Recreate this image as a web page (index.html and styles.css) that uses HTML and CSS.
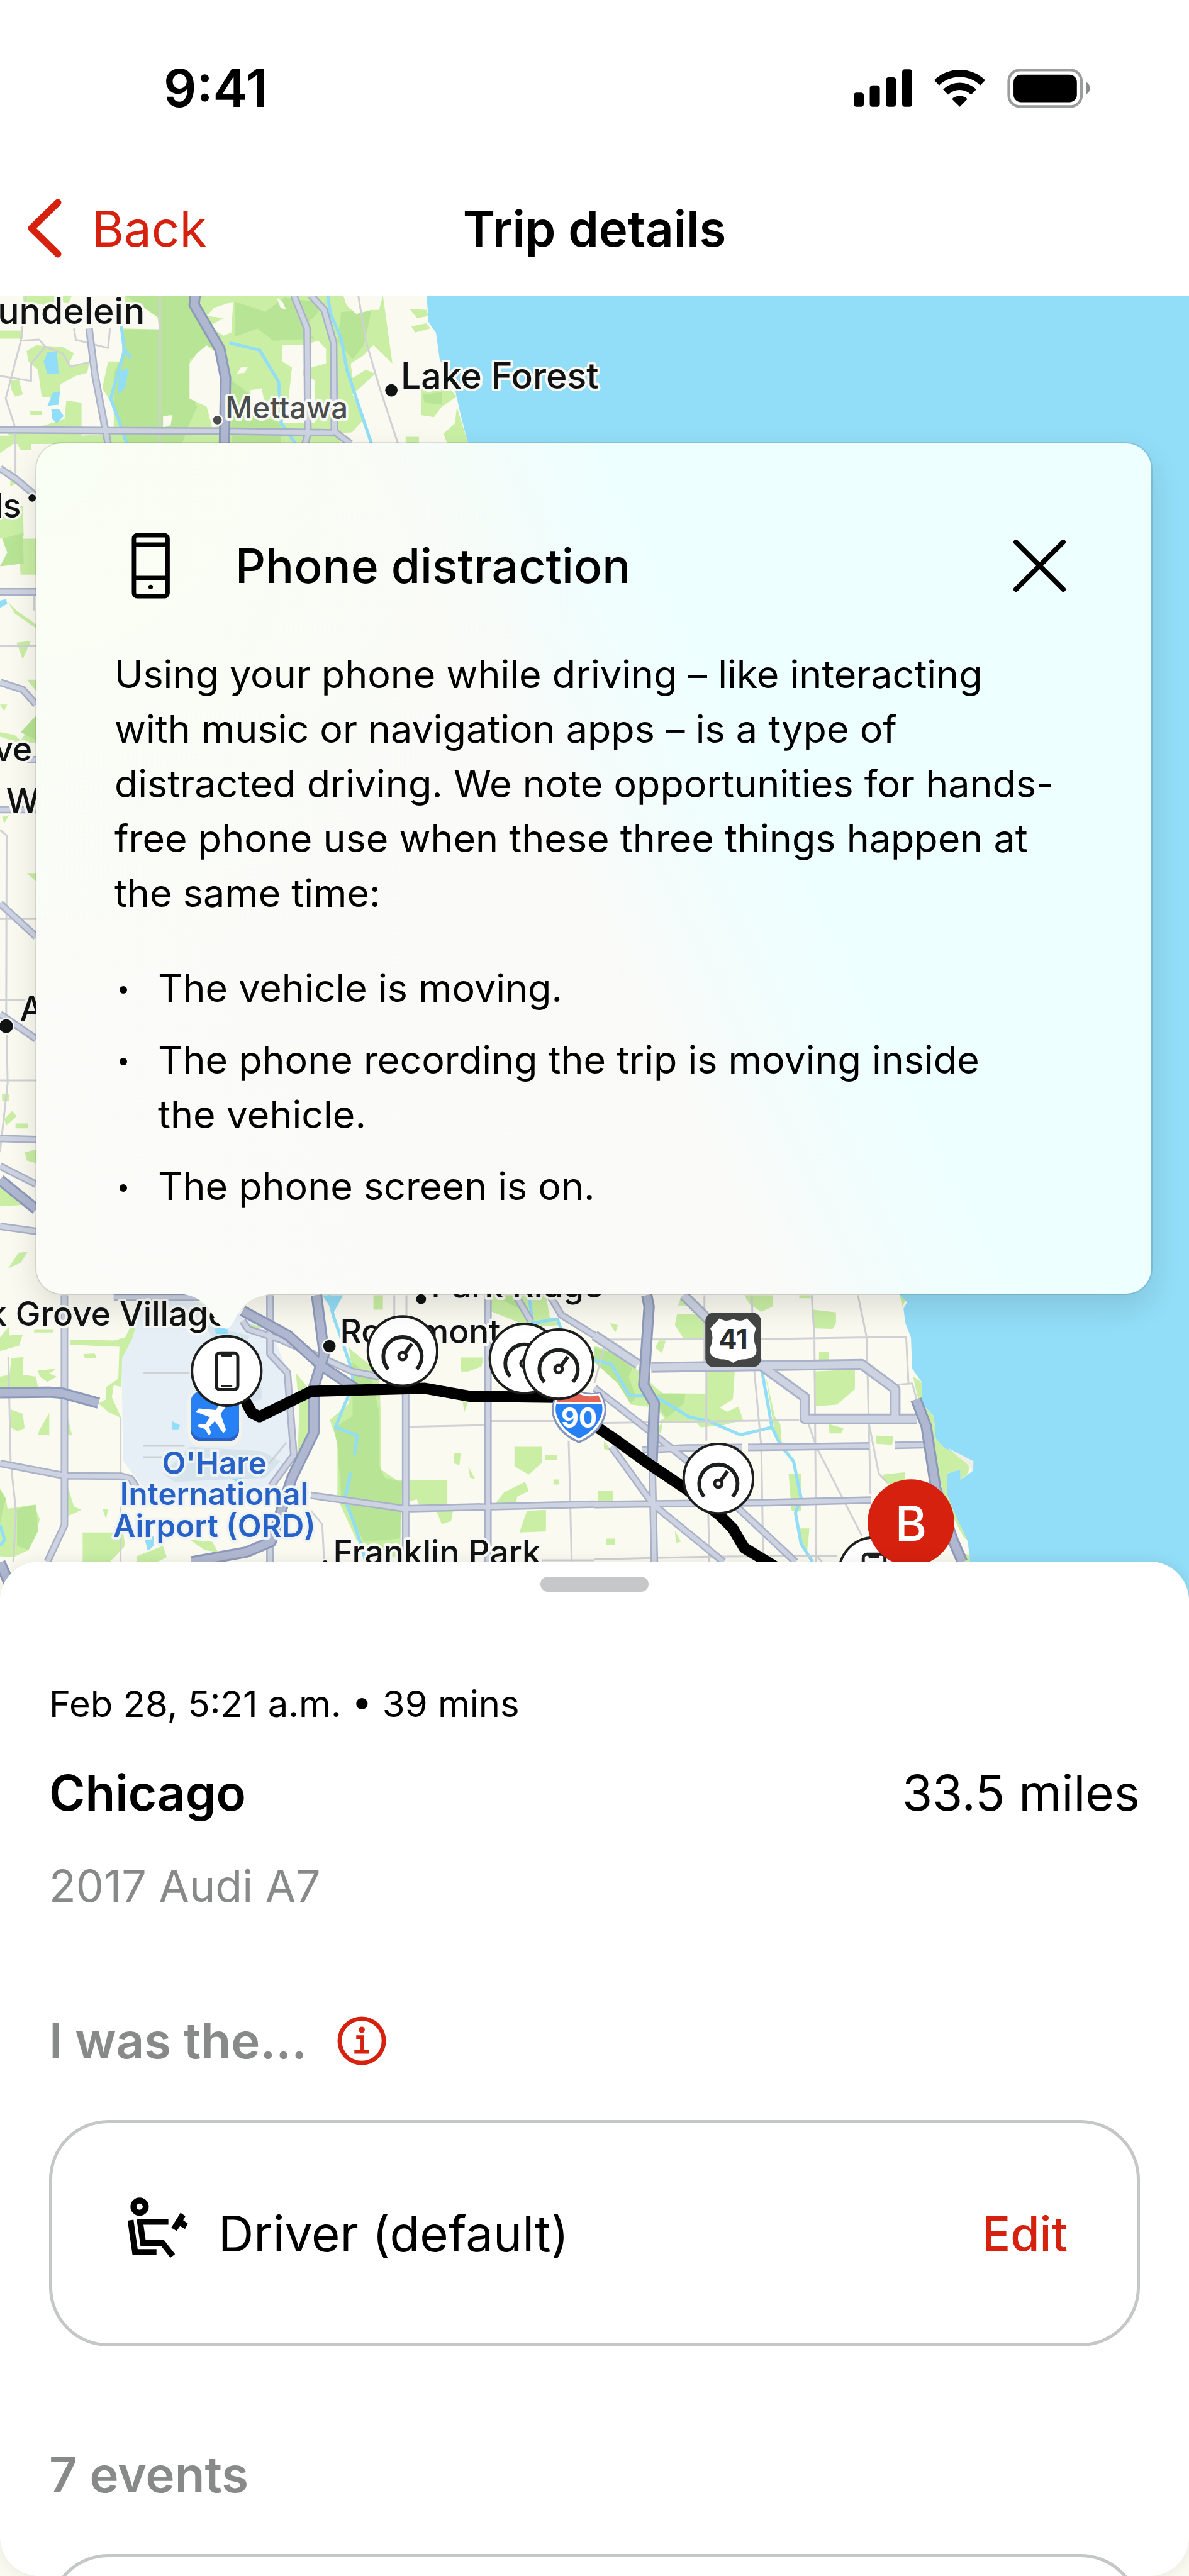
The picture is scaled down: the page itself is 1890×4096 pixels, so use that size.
FILE: index.html
```html
<!DOCTYPE html>
<html lang="en">
<head>
<meta charset="utf-8">
<meta name="viewport" content="width=device-width, initial-scale=1">
<title>Trip details</title>
<link rel="stylesheet" href="styles.css">
</head>
<body>
<div class="screen">
  <div class="status">
    <span class="clock">9:41</span>
    <span class="status-icons">
      <svg class="signal" viewBox="83 66 284 182" aria-hidden="true"><rect x="83" y="179" width="49" height="69" rx="13"/><rect x="161" y="144" width="49" height="104" rx="13"/><rect x="239" y="105" width="49" height="143" rx="13"/><rect x="318" y="66" width="49" height="182" rx="13"/></svg>
      <svg class="wifi" viewBox="475 66 247 182" aria-hidden="true"><path d="M475 119 A176 176 0 0 1 722 119 L698 144 A142 142 0 0 0 499 144Z"/><path d="M518 164 A114 114 0 0 1 679 164 L654 189 A80 80 0 0 0 542 189Z"/><path d="M561 210 A54 54 0 0 1 636 210 L599 248Z"/></svg>
      <svg class="battery" viewBox="831 61 401 192" aria-hidden="true"><rect x="838" y="68" width="352" height="177" rx="54" fill="none" stroke="#9b9d9c" stroke-width="13"/><rect x="861" y="91" width="307" height="133" rx="36"/><path d="M1212 126 Q1231 136 1232 156 Q1231 176 1212 186Z" fill="#8a8c8b"/></svg>
    </span>
  </div>

  <header class="nav">
    <a class="back" href="#trips">
      <svg class="chevron" viewBox="0 0 56 94" aria-hidden="true"><path d="M50 6 L8 47 L50 88"/></svg>
      <span>Back</span>
    </a>
    <h1 class="nav-title">Trip details</h1>
  </header>

  <main class="stage">
    <svg class="map" viewBox="0 477 1920 3685" preserveAspectRatio="xMidYMin slice" role="img" aria-label="Trip map">
      <defs>
        <g id="speed">
          <circle r="56" fill="#fff" stroke="#1d1e1e" stroke-width="4"/>
          <path d="M-23 29 A31 31 0 1 1 23 29" fill="none" stroke="#1d1e1e" stroke-width="6"/>
          <circle cy="8" r="6" fill="none" stroke="#1d1e1e" stroke-width="5"/>
          <path d="M4 3 L15 -12" stroke="#1d1e1e" stroke-width="6"/>
        </g>
        <g id="phone">
          <circle r="56" fill="#fff" stroke="#1d1e1e" stroke-width="4"/>
          <rect x="-17" y="-29" width="35" height="59" rx="6" fill="none" stroke="#1d1e1e" stroke-width="5"/>
          <path d="M-10 -30 H10 L8 -23 H-8Z" fill="#1d1e1e"/>
          <path d="M-9 24 H9" stroke="#1d1e1e" stroke-width="3"/>
        </g>
      </defs>
      <rect y="477" width="1920" height="3685" fill="#fbfaf1"/>

      <!-- north suburbs -->
      <g transform="translate(0 470) scale(.6122 .3333)">
        <g fill="#c9eea4">
          <path d="M328 20 H1010 L1035 350 985 260 960 310 925 350 930 420 965 380 990 400 930 500 960 620 900 740 H50 L20 690 80 670 170 620 175 530 215 540 215 700 300 690 300 560 270 470 285 340 320 340 325 180 420 185 415 125 385 80 330 65Z"/>
          <path d="M60 20 H190 L180 60 150 40 130 70 60 50Z M0 190 H60 V230 H0Z M95 20 H120 V50 H95Z"/>
          <path d="M70 290 L95 262 165 270 195 300 180 360 235 350 230 395 200 410 160 450 155 520 110 510 100 380 75 340Z"/>
          <path d="M30 430 L50 430 60 500 40 510 28 470Z M80 580 H110 V600 H80Z M0 700 H80 L95 740 H0Z"/>
          <path d="M1080 85 L1125 90 1130 120 1100 130Z M1085 170 L1125 155 1135 180 1095 200Z M1110 470 L1190 480 1205 510 1165 560 1145 610 1110 600Z M1205 560 L1235 740 H1180 L1170 690 1200 640Z M1070 705 H1105 V740 H1070Z"/>
          <path d="M440 520 L600 470 600 640 520 640Z"/>
        </g>
        <g fill="#b8e495">
          <path d="M330 20 H540 L500 70 540 150 560 260 500 330 500 480 520 560 500 640 480 740 H330 L300 560 300 400 325 300 325 185 420 185 420 130Z"/>
          <path d="M620 50 L700 100 750 30 860 60 800 180 830 230 720 240 680 180 620 220Z"/>
          <path d="M900 100 L980 90 960 260 930 330 890 240Z M610 430 L660 500 680 600 740 640 740 740 610 740Z M1115 500 L1165 490 1165 550 1120 540Z"/>
        </g>
        <g fill="#fbfaf1">
          <path d="M565 80 L615 50 610 200 590 215 550 170 590 130 545 120Z"/>
          <path d="M545 262 L565 290 590 400 590 650 560 660 545 560 500 520 500 350 520 300Z"/>
          <path d="M745 262 H800 L840 240 860 280 860 350 800 380 800 410 830 430 830 640 745 640 760 540 770 370 745 340Z"/>
          <path d="M625 400 L635 370 655 365 645 395Z M730 30 L745 50 755 90 740 80Z M905 20 H1010 L1000 90 980 90 940 110 915 70Z"/>
          <path d="M660 480 L690 470 700 560 670 600Z M900 690 L940 680 950 740 900 740Z M430 605 L455 600 450 650 430 660Z"/>
        </g>
        <g fill="#92ddf7"><path d="M125 295 L150 295 155 400 125 400 115 340Z M140 490 L158 485 155 550 125 555Z M135 570 L155 570 168 605 150 640 138 620Z M315 390 L340 370 330 470 310 500Z"/></g>
        <g class="stream"><path d="M320 170 L328 290 292 520 318 650 335 740 M328 280 L345 325 M605 250 L685 285 735 440 742 640 780 740 M864 20 L872 110 900 230 915 380 940 520 980 740"/></g>
        <g class="lane"><path d="M422 20 V740 M945 20 L965 240 1000 460 1050 740 M68 20 L55 240 15 520 40 660 V740 M55 240 L103 234 120 270 165 300 185 365 245 340 M120 270 L82 350 82 435 0 410 M195 180 L200 235 285 275 290 180"/></g>
        <g class="road-edge"><path d="M235 180 L250 400 285 740 M775 20 L810 180 812 690 805 740 M820 20 L855 90 880 250 882 680 925 740 M0 672 L590 678 880 686"/></g>
        <g class="road"><path d="M235 180 L250 400 285 740 M775 20 L810 180 812 690 805 740 M820 20 L855 90 880 250 882 680 925 740 M0 672 L590 678 880 686"/></g>
        <g class="highway-edge"><path d="M515 20 L512 65 580 280 595 420 592 740"/></g>
        <g class="highway"><path d="M515 20 L512 65 580 280 595 420 592 740"/></g>
      </g>

      <!-- western edge -->
      <g transform="translate(0 700) scale(.3333 .8929)">
        <g fill="#c9eea4">
          <path d="M0 5 H150 V30 H100 L80 15 0 35Z M50 60 L80 90 50 95Z M0 150 L110 130 115 185 0 190Z M85 190 H175 V255 H100Z M0 540 L70 545 100 555 175 515 V560 L90 560 0 548Z M80 378 L150 375 110 408Z M130 445 H175 V465Z M0 490 L35 490 20 502Z M40 305 L80 320 175 345 V352 L70 325Z M10 693 L45 690 20 705Z M130 795 H175 V810Z"/>
          <path d="M10 1195 H45 V1207 H10Z M20 1240 L60 1225 80 1235 30 1252Z M75 1248 H135 V1257 H75Z M120 1300 L175 1295 V1320 L130 1315Z M0 1360 L90 1375 120 1395 0 1398Z M40 1510 L90 1482 135 1480 100 1500Z"/>
        </g>
        <path d="M10 190 L110 180 115 235 0 240 35 215Z M100 540 L175 510 V555Z" fill="#b8e495"/>
        <path d="M0 302 L30 299 35 308 0 315Z" fill="#92ddf7"/>
        <g class="lane"><path d="M75 0 V75 M0 384 H175 M0 717 L32 727 30 1050 37 1175 0 1300 M0 878 H175 M0 1025 H140 M0 1170 H175 M165 285 V320"/></g>
        <g class="road-edge"><path d="M0 63 L80 83 175 113 M0 286 H175 M0 450 L110 463 175 490 M100 590 H175 M0 680 H175 M0 850 L175 910 M0 1050 L175 1095 M0 1275 L175 1277 M0 1325 L175 1358 M0 1434 L175 1443"/></g>
        <g class="road"><path d="M0 63 L80 83 175 113 M0 286 H175 M0 450 L110 463 175 490 M100 590 H175 M0 680 H175 M0 850 L175 910 M0 1050 L175 1095 M0 1275 L175 1277 M0 1325 L175 1358 M0 1434 L175 1443"/></g>
        <g class="highway-edge"><path d="M0 1350 L175 1403"/></g>
        <g class="highway"><path d="M0 1350 L175 1403"/></g>
      </g>

      <!-- airport and inner suburbs -->
      <g transform="translate(0 2060) scale(.6122 .3333)">
        <path d="M360 200 L400 95 500 120 640 190 720 290 760 470 775 840 710 1020 500 1060 380 1030 325 900 320 400Z" fill="#e6eef6"/>
        <path d="M540 240 L660 290 650 320 560 300Z M620 540 L690 540 690 600 640 620Z M500 830 L690 850 740 900 700 980 460 1000 430 960Z" fill="#d6e5ec"/>
        <g fill="#c9eea4">
          <path d="M25 150 V290 L60 285 50 340 0 366 V300 L22 250Z M90 260 H140 V276 H90Z M30 400 L62 395 60 480 95 490 100 540 0 540 V490 L25 480Z M100 460 L150 450 130 475 150 490 125 515 105 490Z M220 380 L250 378 255 400 225 402Z"/>
          <path d="M185 310 L300 315 330 300 370 150 350 300 322 400 320 540 300 530 295 590 320 690 285 660 260 620 280 600 280 540 312 500 315 345 185 335Z"/>
          <path d="M30 650 L60 670 65 740 45 755 25 730Z M130 665 V775 L100 770 105 745Z M175 660 L190 775 170 770Z M0 1030 L15 1080 20 1130 90 1110 105 1180 95 1250 75 1330 35 1365 0 1360Z"/>
          <path d="M175 1000 L195 1120 215 1135 180 1165Z M218 1245 H325 L330 1310 290 1387 H218Z M360 1360 L430 1310 440 1365 415 1387 H360Z M500 1280 L560 1290 575 1340 540 1330Z M270 1130 L285 1130 280 1180Z"/>
          <path d="M780 470 L815 550 815 760 785 860 790 640Z M650 230 L690 250 670 265Z M985 95 H1010 V165 H985Z M1215 397 H1275 L1270 440 1235 465 1215 465Z M1198 860 L1215 862 1212 920 1198 910Z M1235 925 L1253 985 1240 980Z M1357 830 H1430 L1430 905 1395 965 1357 925Z M1437 870 H1470 V893 H1437Z M1460 988 H1475 V1013 H1460Z M1308 1100 L1330 1050 1385 1000 1395 1045 1365 1070 1360 1100 1310 1120Z M1390 1140 L1440 1135 1440 1240 1370 1245Z M1220 610 L1235 610 1225 660Z"/>
          <path d="M920 350 L1000 470 1005 700 1005 940 1045 990 1180 990 1180 1110 1105 1110 1100 1085 1060 1100 1055 1360 980 1370 940 1280 890 1080 890 800 870 700 920 620 930 480Z"/>
          <path d="M1150 1135 L1195 1140 1190 1190 1165 1205Z M1295 95 H1440 L1450 200 1480 240 1400 250 1290 170Z"/>
        </g>
        <path d="M930 420 L980 500 1000 660 1000 920 1015 980 1060 1000 1055 1275 960 1290 900 1080 890 820 880 740 930 680Z M45 1130 L95 1110 100 1240 75 1330 45 1310Z M0 1040 L15 1080 0 1200Z M1300 95 H1350 L1390 180Z" fill="#b8e495"/>
        <g fill="#92ddf7"><path d="M565 255 H600 V283 H570Z M453 705 L475 725 470 745 453 745Z M380 1265 H405 V1310 L390 1335Z M610 985 L640 980 625 1000Z M850 95 L905 95 880 180 870 150Z"/></g>
        <g class="stream"><path d="M865 95 L880 200 905 330 930 470 930 540 910 620 885 735 942 775 935 870 M925 955 L910 1080 945 1260 965 1387 M0 1210 L12 1280 0 1310 M1395 95 L1405 230 1470 210 1480 260"/></g>
        <g class="lane"><path d="M22 395 L28 900 42 1140 35 1387 M318 690 V1387 M378 473 H500 M378 825 H487 M378 880 H430 M1075 733 L1280 725 1295 705 H1568 M1040 95 V250 M1500 800 L1508 1387 M710 910 L755 810 M820 1140 L850 1205 855 1387 M1430 1380 H1568 M1072 95 V200"/></g>
        <g class="road-edge"><path d="M170 95 V1210 L125 1387 M0 910 L170 970 320 972 345 985 365 1040 M300 105 H560 M712 95 V380 L758 470 775 870 715 1020 M640 220 L655 260 740 310 930 465 1000 490 M820 1065 L1068 1130 1568 1108 M1070 570 V1387 M1287 95 V1387 M1360 95 L1400 220 M1450 95 L1480 190 1568 290 M712 1280 V1387"/></g>
        <g class="road"><path d="M170 95 V1210 L125 1387 M0 910 L170 970 320 972 345 985 365 1040 M300 105 H560 M712 95 V380 L758 470 775 870 715 1020 M640 220 L655 260 740 310 930 465 1000 490 M820 1065 L1068 1130 1568 1108 M1070 570 V1387 M1287 95 V1387 M1360 95 L1400 220 M1450 95 L1480 190 1568 290 M712 1280 V1387"/></g>
        <g class="highway-edge"><path d="M0 568 L130 565 165 570 260 618 M0 1390 L40 1560 M640 170 L760 290 850 440 940 550 M835 95 L855 380 828 540 828 760 770 980 715 1290 650 1340 505 1387"/></g>
        <g class="highway"><path d="M0 568 L130 565 165 570 260 618 M0 1390 L40 1560 M640 170 L760 290 850 440 940 550 M835 95 L855 380 828 540 828 760 770 980 715 1290 650 1340 505 1387"/></g>
      </g>

      <!-- city and lake front -->
      <g transform="translate(960 2060) scale(.6122 .3333)">
        <g fill="#c9eea4">
          <path d="M0 340 L60 380 110 450 160 540 180 570 295 572 298 460 370 465 365 600 330 640 350 660 380 635 392 700 340 725 280 735 265 705 170 705 185 690 160 640 95 625 60 500 0 410Z"/>
          <path d="M218 185 H290 L292 300 235 305 212 240Z M230 95 L245 145 220 145Z M395 95 H470 V150 L440 175 410 140Z M577 165 L637 178 637 230 628 258 578 255Z M592 368 H618 V415 H592Z M578 465 L687 455 687 550 640 625 582 635Z M540 95 H570 V110 H540Z M40 230 L62 240 55 275Z M170 315 L188 315 178 375 160 350Z"/>
          <path d="M450 470 L475 680 490 720 495 825 478 790 465 640Z M618 720 L657 740 650 765 620 765Z M742 775 L788 780 785 820 742 815Z M760 965 L818 953 818 1010 770 1010Z M512 960 H545 V1140 H520Z M540 1225 H567 L560 1350 540 1290Z M10 1045 H48 V1095 H10Z M30 1275 H54 V1305 H30Z M212 1235 L228 1290 215 1295Z M805 95 L820 120 812 150Z M25 800 L45 850 25 840Z M180 710 L175 770 165 740Z"/>
        </g>
        <path d="M0 350 L50 375 100 450 90 490 110 590 95 620 60 520 0 420Z M165 572 H240 L235 620 190 690 170 640Z" fill="#b8e495"/>
        <g class="stream"><path d="M0 410 L45 430 92 582 160 585 250 685 300 705 385 772 468 735 442 465 M468 735 L490 820 525 900 545 1080 530 1150 545 1300 575 1387"/></g>
        <g class="lane"><path d="M290 95 V420 M415 95 L420 430 440 830 445 1387 M573 95 L580 300 585 1387 M695 95 L718 300 728 1060 M822 295 L828 520 M0 310 L440 308 822 296 M0 715 L540 700 M295 460 V800 M565 720 L585 830 705 1260 M722 700 L750 960 770 1000 M25 350 L0 520 M0 1375 L300 1362 640 1357 M790 530 L838 523 850 600 M300 1150 L303 1387 M585 1357 L600 1387"/></g>
        <g class="road-edge"><path d="M0 545 L150 760 250 905 530 1387 M125 845 L240 835 390 833 M405 833 L725 825 M792 823 L870 820 M45 830 L155 1110 340 1387 M0 1110 L460 1100 730 1088 M152 900 L158 1387"/></g>
        <g class="road"><path d="M0 545 L150 760 250 905 530 1387 M125 845 L240 835 390 833 M405 833 L725 825 M792 823 L870 820 M45 830 L155 1110 340 1387 M0 1110 L460 1100 730 1088 M152 900 L158 1387"/></g>
        <g class="avenue-edge"><path d="M0 290 L115 430 M235 95 L370 340 450 450 555 590 V695 H850 M150 445 L705 430 793 550 V690"/></g>
        <g class="avenue"><path d="M0 290 L115 430 M235 95 L370 340 450 450 555 590 V695 H850 M150 445 L705 430 793 550 V690"/></g>
      </g>

      <path d="M689 477 L692 520 704 537 710 580 735 630 744 670 756 717 900 1100 1300 1800 1453 2092 1465 2103 1459 2113 1462 2137 1471 2160 1473 2210 1489 2233 1488 2267 1508 2287 1511 2323 1523 2337 1541 2347 1572 2360 1569 2377 1551 2390 1551 2373 1529 2380 1529 2413 1541 2443 1563 2490 1566 2522 1600 2700 1920 3900 V477Z" fill="#92ddf7"/>
      <path d="M1474 2222 L1489 2233 1488 2267 1508 2287 1511 2323 1523 2337 1541 2347 1566 2366 1563 2380 1551 2390 1551 2373 1529 2380 1529 2413 1541 2443 1563 2490 1556 2482 1528 2430 1510 2360 1490 2290Z M1548 2505 L1566 2512 V2524 H1552Z" fill="#c9eea4"/>
      <path d="M1530 2338 L1572 2360 1571 2378 1562 2365Z" fill="#efefe4"/>

      <g transform="translate(960 2060) scale(.6122 .3333)">
        <g class="highway-edge"><path d="M138 95 L144 150 130 530 158 620 152 900 M848 600 L875 730 900 1030 945 1280 970 1387"/></g>
        <g class="highway"><path d="M138 95 L144 150 130 530 158 620 152 900 M848 600 L875 730 900 1030 945 1280 970 1387"/></g>
      </g>

      <g class="place">
        <text x="234" y="523" text-anchor="end" class="wide">undelein</text>
        <text x="34" y="836" text-anchor="end">ls</text><circle cx="52" cy="804" r="6"/>
        <text x="52" y="1229" text-anchor="end">ve</text>
        <text x="10" y="1312">W</text>
        <circle cx="10" cy="1657" r="11"/><text x="32" y="1648">A</text>
        <text x="368" y="2141" text-anchor="end">k Grove Village</text>
        <circle cx="680" cy="2098" r="8"/><text x="696" y="2095">Park Ridge</text>
        <circle cx="532" cy="2174" r="10"/><text x="549" y="2169">Rosemont</text>
        <circle cx="525" cy="2524" r="4"/><text x="538" y="2526">Franklin Park</text>
      </g>
      <g class="place"><circle cx="632" cy="630" r="10"/><text x="647" y="627" class="wide">Lake Forest</text></g>
      <g class="place minor"><circle cx="351" cy="678" r="7"/><text x="364" y="675">Mettawa</text></g>

      <path d="M389 2250 L407 2282 419 2288 502 2247 686 2242 759 2255 918 2257 960 2302 994 2325 1046 2363 1107 2404 1162 2447 1183 2468 1202 2500 1242 2524 1300 2560" fill="none" stroke="#000" stroke-width="18" stroke-linejoin="round"/>

      <!-- airport badge -->
      <rect x="303" y="2244" width="88" height="92" rx="22" fill="#f3f3ec"/>
      <rect x="308" y="2248" width="78" height="80" rx="18" fill="#2b60c4"/>
      <rect x="308" y="2246" width="78" height="76" rx="18" fill="#2880f5"/>
      <g transform="translate(346 2288) rotate(38)"><path fill="#fff" d="M0 -34 C4 -34 5 -28 5 -22 V-10 L28 5 V12 L5 5 L4 18 L12 24 V29 L0 25 L-12 29 V24 L-4 18 L-5 5 L-28 12 V5 L-5 -10 V-22 C-5 -28 -4 -34 0 -34Z"/></g>
      <g class="airport"><text x="346" y="2381">O'Hare</text><text x="346" y="2431">International</text><text x="346" y="2482">Airport (ORD)</text></g>

      <!-- route shields -->
      <rect x="1139" y="2120" width="90" height="88" rx="14" fill="#444645"/>
      <path d="M1162 2129 Q1172 2136 1184 2130 Q1196 2136 1206 2129 L1221 2145 Q1214 2160 1221 2176 Q1225 2192 1204 2195 Q1191 2195 1184 2201 Q1177 2195 1164 2195 Q1143 2192 1147 2176 Q1154 2160 1147 2145Z" fill="#fff"/>
      <text class="shield" x="1184" y="2179" fill="#2b2c2c">41</text>
      <path d="M900 2248 Q918 2252 935 2246 Q952 2252 970 2248 Q982 2268 978 2286 Q970 2316 935 2331 Q900 2316 892 2286 Q888 2268 900 2248Z" fill="#8694b8"/>
      <path d="M902 2250 Q918 2255 935 2248 Q952 2255 968 2250 Q979 2268 975 2285 Q967 2313 935 2327 Q903 2313 895 2285 Q891 2268 902 2250Z" fill="#fff"/>
      <path d="M898 2268 H972 Q974 2278 971 2286 Q963 2310 935 2323 Q907 2310 899 2286 Q896 2278 898 2268Z" fill="#2880f5"/>
      <path d="M904 2253 Q920 2258 935 2251 Q950 2258 966 2253 L971 2264 H899Z" fill="#e66457"/>
      <text class="shield" x="935" y="2306" fill="#fff">90</text>

      <use href="#speed" x="650" y="2182"/>
      <use href="#speed" x="847" y="2194"/>
      <use href="#speed" x="902" y="2203"/>
      <use href="#speed" x="1160" y="2388"/>
      <use href="#phone" x="366" y="2214"/>
      <use href="#phone" x="1411" y="2539"/>
      <circle cx="1471" cy="2459" r="70" fill="#d6210f"/>
      <text class="stop" x="1471" y="2488">B</text>
    </svg>

    <section class="popover" aria-labelledby="popover-title">
      <div class="popover-head">
        <svg class="device" viewBox="66 62 184 320" aria-hidden="true"><rect x="77" y="74" width="163" height="296" rx="16"/><path d="M77 120 H240 M77 281 H240"/><circle cx="158" cy="325" r="11"/></svg>
        <h2 id="popover-title">Phone distraction</h2>
        <button class="close" type="button" aria-label="Close"><svg viewBox="0 0 84 84" aria-hidden="true"><path d="M4 4 L80 80 M80 4 L4 80"/></svg></button>
      </div>
      <p>Using your phone while driving – like interacting with music or navigation apps – is a type of distracted driving. We note opportunities for hands-free phone use when these three things happen at the same time:</p>
      <ul>
        <li>The vehicle is moving.</li>
        <li>The phone recording the trip is moving inside the vehicle.</li>
        <li>The phone screen is on.</li>
      </ul>
      <svg class="tail" viewBox="0 0 172 58" aria-hidden="true"><path d="M0 0 C40 0 52 18 66 40 C74 53 80 56 84 57 C90 56 94 50 100 38 C112 16 128 0 172 0Z"/></svg>
    </section>

    <section class="sheet">
      <span class="handle"></span>
      <p class="when">Feb 28, 5:21 a.m. • 39 mins</p>
      <div class="trip"><h2>Chicago</h2><span class="distance">33.5 miles</span></div>
      <p class="vehicle">2017 Audi A7</p>
      <div class="role">
        <h3>I was the...</h3>
        <button class="info" type="button" aria-label="About roles"><svg viewBox="-40 -40 80 80" aria-hidden="true"><circle r="36" fill="none" stroke="currentColor" stroke-width="7"/><circle cy="-18" r="5" fill="currentColor"/><path d="M-9 -6 H1 V18 M-12 18 H12" fill="none" stroke="currentColor" stroke-width="6"/></svg></button>
      </div>
      <div class="card">
        <svg class="driver" viewBox="40 65 300 356" aria-hidden="true"><circle cx="104" cy="112" r="30" fill="none" stroke="#000" stroke-width="29"/><path d="M60 178 L82 333 H186 M244 186 H106 L121 288 H215 L265 352" fill="none" stroke="#000" stroke-width="29"/><path d="M303 142 L327 158 316 178 339 195 325 221 301 207 284 230 258 215Z"/></svg>
        <span class="card-text">Driver (default)</span>
        <button class="edit" type="button">Edit</button>
      </div>
      <h3 class="events">7 events</h3>
      <div class="card"></div>
    </section>
  </main>
</div>
</body>
</html>
```
FILE: styles.css
```css
* { box-sizing: border-box; }

body {
  margin: 0;
  background: #fff;
  color: #000;
  font-family: Inter, "Liberation Sans", sans-serif;
}

h1, h2, h3, p, ul { margin: 0; padding: 0; }

button {
  margin: 0;
  padding: 0;
  border: 0;
  background: none;
  font: inherit;
}

svg { display: block; }

.screen {
  display: flex;
  flex-direction: column;
  height: 100vh;
  overflow: hidden;
}

/* Status bar */
.status {
  display: flex;
  flex: none;
  align-items: center;
  justify-content: space-between;
  height: 256px;
  padding: 24px 157px 0 260px;
}
.clock { font-size: 82px; font-weight: 600; }
.status-icons { display: flex; align-items: center; gap: 35px; }
.signal { width: 93px; height: 60px; }
.wifi { width: 81px; height: 60px; }
.battery { width: 132px; height: 63px; }

/* Navigation bar */
.nav {
  display: grid;
  flex: none;
  grid-template-columns: 1fr auto 1fr;
  align-items: center;
  height: 214px;
  padding: 0 42px;
}
.back {
  display: flex;
  align-items: center;
  gap: 48px;
  color: #d6210f;
  font-size: 78px;
  text-decoration: none;
}
.chevron {
  width: 56px;
  height: 94px;
  fill: none;
  stroke: currentColor;
  stroke-width: 11;
  stroke-linecap: round;
  stroke-linejoin: round;
}
.nav-title { font-size: 78px; font-weight: 600; }

/* Map */
.stage {
  position: relative;
  display: flex;
  flex: 1;
  flex-direction: column;
  min-height: 0;
}
.map {
  position: absolute;
  inset: 0;
  width: 100%;
  height: 100%;
}
.map g[class] path { fill: none; vector-effect: non-scaling-stroke; stroke-linejoin: round; }
.stream path { stroke: #92ddf7; stroke-width: 5; }
.lane path { stroke: #d0d1d5; stroke-width: 3; }
.road-edge path { stroke: #a9b2c9; stroke-width: 12; }
.road path { stroke: #cdd3e1; stroke-width: 7; }
.avenue-edge path { stroke: #a9b2c9; stroke-width: 17; }
.avenue path { stroke: #cdd3e1; stroke-width: 11; }
.highway-edge path { stroke: #8d99b8; stroke-width: 18; }
.highway path { stroke: #afb8d0; stroke-width: 12; }

.map text { font-weight: 500; }
.place {
  fill: #111212;
  font-size: 54px;
  stroke: #f8f8f4;
  stroke-width: 8;
  stroke-linejoin: round;
  paint-order: stroke;
}
.place circle { stroke-width: 5; }
.wide { font-size: 58px; }
.minor { fill: #4c4e4e; font-size: 48px; }
.airport {
  fill: #2763c6;
  font-size: 50px;
  text-anchor: middle;
  stroke: #f0f3f5;
  stroke-width: 8;
  stroke-linejoin: round;
  paint-order: stroke;
}
.map .airport text { font-weight: 600; }
.map .shield { font-size: 44px; font-weight: 700; text-anchor: middle; }
.stop { fill: #fff; font-size: 78px; text-anchor: middle; }

/* Explanation popover */
.popover {
  position: relative;
  flex: none;
  margin: 235px 60px 0 58px;
  padding: 134px 132px 127px 124px;
  border-radius: 40px;
  background:
    radial-gradient(circle at 0 0, #f9fff3 0, rgba(249, 255, 243, 0) 900px),
    linear-gradient(64deg, #fbfcf8 0, #fafaf8 48%, #f0fdfc 58%, #eeffff 64%);
  box-shadow: 0 0 0 2px rgba(0, 0, 0, .1), 0 20px 50px rgba(0, 0, 0, .12);
  font-size: 61px;
  line-height: 87px;
}
.popover-head {
  display: flex;
  align-items: center;
  height: 120px;
  margin-bottom: 70px;
}
.popover-head h2 { flex: 1; font-size: 75px; font-weight: 500; }
.device {
  width: 61px;
  height: 105px;
  margin: 0 104px 0 27px;
  fill: none;
  stroke: #000;
  stroke-width: 21;
}
.device circle { fill: #000; stroke: none; }
.close { margin-right: 4px; }
.close svg {
  width: 83px;
  height: 83px;
  stroke: #000;
  stroke-width: 8;
  stroke-linecap: round;
}
.popover ul {
  display: grid;
  gap: 27px;
  margin-top: 64px;
  padding-right: 60px;
  list-style: none;
}
.popover li { display: flex; }
.popover li::before {
  flex: none;
  width: 12px;
  height: 12px;
  margin: 40px 49px 0 8px;
  border-radius: 50%;
  background: #000;
  content: "";
}
.tail {
  position: absolute;
  top: 100%;
  left: 219px;
  width: 169px;
  height: 57px;
  fill: #fafcf7;
}

/* Trip sheet */
.sheet {
  position: relative;
  display: flex;
  flex: 1;
  flex-direction: column;
  min-height: 0;
  margin-top: 426px;
  padding: 24px 78px 0;
  overflow: hidden;
  border-radius: 62px;
  background: #fff;
  box-shadow: 0 0 24px rgba(0, 0, 0, .08);
}
.sheet > * { flex: none; }
.handle {
  align-self: center;
  width: 172px;
  height: 24px;
  margin-bottom: 142px;
  border-radius: 12px;
  background: #c5c7c9;
}
.when { font-size: 58px; line-height: 72px; }
.trip {
  display: flex;
  justify-content: space-between;
  margin: 56px 0;
  font-size: 78px;
  line-height: 100px;
}
.trip h2, .sheet h3 { font-size: 78px; font-weight: 600; line-height: 100px; }
.vehicle { color: #888a89; font-size: 70px; line-height: 84px; }
.role {
  display: flex;
  align-items: center;
  gap: 48px;
  margin: 154px 0 76px;
}
.sheet h3 { color: #888a89; }
.info { color: #d6210f; }
.info svg { width: 78px; height: 78px; }
.card {
  display: flex;
  align-items: center;
  height: 360px;
  padding: 0 110px 0 118px;
  border: 5px solid #c5c7c7;
  border-radius: 94px;
  font-size: 78px;
}
.driver { width: 98px; height: 117px; margin-right: 48px; }
.card-text { flex: 1; }
.edit { color: #d6210f; font-size: 75px; font-weight: 500; }
.sheet .events { margin: 154px 0 76px; }
```
